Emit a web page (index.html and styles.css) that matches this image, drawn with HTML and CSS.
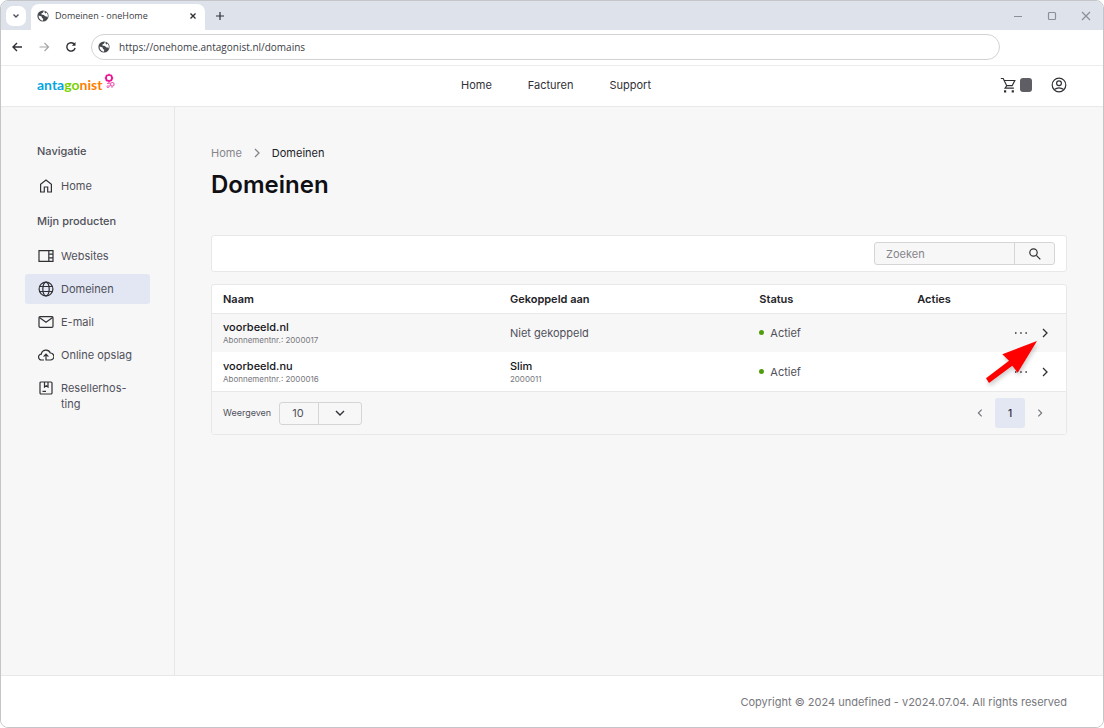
FILE: index.html
```html
<!DOCTYPE html>
<html lang="nl">
<head>
<meta charset="utf-8">
<meta name="viewport" content="width=device-width, initial-scale=1">
<title>Domeinen - oneHome</title>
<link rel="stylesheet" href="styles.css">
</head>
<body>
<svg class="sprite" aria-hidden="true">
  <symbol id="earth" viewBox="0 0 12 12"><circle cx="6" cy="6" r="5.600" fill="#45484c"/><path d="M1.600 5.400 4.600 6.600 5 8l1.200.7-.2 2A4.900 4.900 0 0 1 1.600 5.400ZM6.600 1.300 6 2.700 4.600 3.200 4.400 4.500 7 5l1 1.200 1.600.2.9 1.200A4.900 4.900 0 0 0 9.600 2.600L8.400 3.400 7.600 2.800 8 1.600Z" fill="#fff"/></symbol>
  <symbol id="right" viewBox="0 0 12 12"><path d="M4 2l4 4-4 4" fill="none" stroke="currentColor" stroke-width="1.300"/></symbol>
</svg>
<div class="window">
  <div class="tabstrip">
    <button class="tab-search" aria-label="Tabbladen zoeken"><svg width="8" height="8" viewBox="0 0 8 8"><path d="M1.500 2.500 4 5l2.500-2.500" class="line bold"/></svg></button>
    <div class="tab">
      <svg width="12" height="12"><use href="#earth"/></svg>
      <span class="tab-title">Domeinen - oneHome</span>
      <button class="plain" aria-label="Tabblad sluiten"><svg width="8" height="8" viewBox="0 0 8 8"><path d="m1.500 1.500 5 5m0-5-5 5" class="line bold"/></svg></button>
    </div>
    <button class="plain new-tab" aria-label="Nieuw tabblad"><svg width="10" height="10" viewBox="0 0 10 10"><path d="M5 1v8M1 5h8" class="line"/></svg></button>
    <div class="window-controls">
      <button class="plain" aria-label="Minimaliseren"><svg width="10" height="10" viewBox="0 0 10 10"><path d="M1 5.500h8" class="line"/></svg></button>
      <button class="plain" aria-label="Maximaliseren"><svg width="10" height="10" viewBox="0 0 10 10"><rect x="1.500" y="1.500" width="7" height="7" rx="1" class="line"/></svg></button>
      <button class="plain" aria-label="Sluiten"><svg width="10" height="10" viewBox="0 0 10 10"><path d="m1 1 8 8m0-8-8 8" class="line"/></svg></button>
    </div>
  </div>
  <div class="toolbar">
    <button class="plain" aria-label="Terug"><svg width="12" height="12" viewBox="0 0 12 12"><path d="M11 6H2M6 2 2 6l4 4" class="line bold"/></svg></button>
    <button class="plain faded" aria-label="Vooruit"><svg width="12" height="12" viewBox="0 0 12 12"><path d="M1.500 6h9M6.500 2l4 4-4 4" class="line"/></svg></button>
    <button class="plain" aria-label="Vernieuwen"><svg width="12" height="12" viewBox="0 0 12 12"><path d="M9.500 3.500A4.200 4.200 0 1 0 10.100 7" class="line bold"/><path d="M10.500 1v3.700H6.800Z" fill="currentColor"/></svg></button>
    <label class="address"><svg width="12" height="12"><use href="#earth"/></svg><input type="url" aria-label="Adres" value="https://onehome.antagonist.nl/domains"></label>
  </div>

  <header class="header">
    <a class="logo" href="#" aria-label="antagonist"><span class="blue">anta</span><span class="green">go</span><span class="orange">nist</span><svg width="14" height="20" viewBox="0 0 14 20"><g fill="none" stroke="#ec1593"><circle cx="7" cy="7" r="3" stroke-width="1.700"/><path d="M7 2.800v1.200M2.800 7H4M10 7h1.200M7 10v1.800M4 4l.8.8M10 4l-.8.8M4 10l.8-.8" stroke-width="1.300"/></g><g fill="none" stroke="#f05ab4"><circle cx="10.300" cy="13.300" r="1.800" stroke-width="1.200"/><circle cx="6" cy="15.700" r="1" stroke-width="1"/><path d="m5 12.300 3.500.6M7 15.200l1.800-1M9.700 15.200l.4 1.700" stroke-width="1"/></g></svg></a>
    <nav class="topnav" aria-label="Hoofdmenu"><a href="#">Home</a><a href="#">Facturen</a><a href="#">Support</a></nav>
    <div class="account">
      <button class="plain cart" aria-label="Winkelwagen"><svg width="16" height="18" viewBox="0 0 16 18"><path d="M.8 2.500h2.400l3.500 7.200h5.500l2.600-5.200H4.300M6.700 9.700l-1.600 2.500h8.800" class="line"/><path d="M4 14.200h2.200v2.200H4zM11.700 14.200h2.200v2.200h-2.200z" fill="currentColor"/></svg><span class="badge"></span></button>
      <button class="plain" aria-label="Account"><svg width="16" height="16" viewBox="0 0 16 16"><circle cx="8" cy="8" r="6.800" class="line"/><circle cx="8" cy="6.300" r="2.400" class="line"/><path d="M3.300 12.600c2.800-2.100 6.600-2.100 9.400 0" class="line"/></svg></button>
    </div>
  </header>

  <div class="body">
    <aside class="sidebar">
      <h2>Navigatie</h2>
      <a class="item" href="#"><svg width="16" height="16" viewBox="0 0 16 16"><path d="M2.600 14V6.300L8 2l5.400 4.300V14H9.700V9H6.300v5Z" class="line"/></svg>Home</a>
      <h2 class="second">Mijn producten</h2>
      <a class="item" href="#"><svg width="16" height="16" viewBox="0 0 16 16"><path d="M1 2.700h14v10.600H1ZM10.800 2.700v10.600M10.800 6.200H15M10.800 9.800H15" class="line"/></svg>Websites</a>
      <a class="item active" href="#" aria-current="page"><svg width="16" height="16" viewBox="0 0 16 16"><g class="line"><circle cx="8" cy="8" r="6.900"/><ellipse cx="8" cy="8" rx="3.200" ry="6.900"/><path d="M1.700 5.500h12.600M1.700 10.500h12.600"/></g></svg>Domeinen</a>
      <a class="item" href="#"><svg width="16" height="16" viewBox="0 0 16 16"><rect x="1" y="2.700" width="14" height="10.600" rx="1" class="line"/><path d="m1.400 3.600 6.600 4.600 6.600-4.600" class="line"/></svg>E-mail</a>
      <a class="item" href="#"><svg width="16" height="16" viewBox="0 0 16 16"><path d="M6 13H3.600a2.900 2.900 0 0 1-.3-5.800 4.700 4.700 0 0 1 9-1.200 3.500 3.500 0 0 1 .2 7H8V7.300M5.600 9.600 8 7.200l2.400 2.400" class="line"/></svg>Online opslag</a>
      <a class="item" href="#"><svg width="16" height="16" viewBox="0 0 16 16"><rect x="2" y="2" width="12" height="12" rx="1" class="line"/><path d="M6.500 2v5L8.300 5.700 10 7V2M4.500 11.300H8" class="line"/></svg><span>Resellerhos-<br>ting</span></a>
    </aside>

    <main class="main">
      <nav class="crumbs" aria-label="Kruimelpad"><a href="#">Home</a><svg width="12" height="12"><use href="#right"/></svg><span>Domeinen</span></nav>
      <h1>Domeinen</h1>
      <form class="filter card">
        <div class="search"><input type="search" placeholder="Zoeken" aria-label="Zoeken"><button type="button" aria-label="Zoek"><svg width="14" height="14" viewBox="0 0 14 14"><circle cx="5.500" cy="5.500" r="3.700" class="line"/><path d="m8.300 8.300 4 4" class="line"/></svg></button></div>
      </form>
      <section class="list card">
        <table>
          <colgroup><col class="c-name"><col class="c-link"><col class="c-status"><col></colgroup>
          <thead><tr><th>Naam</th><th>Gekoppeld aan</th><th>Status</th><th>Acties</th></tr></thead>
          <tbody>
            <tr>
              <td><a class="name" href="#">voorbeeld.nl</a><small>Abonnementnr.: 2000017</small></td>
              <td>Niet gekoppeld</td>
              <td><span class="status">Actief</span></td>
              <td><div class="actions"><button class="plain" aria-label="Meer"><svg width="14" height="14" viewBox="0 0 14 14"><path d="M1 6.300h1.500v1.500H1zM6.200 6.300h1.500v1.500H6.200zM11.400 6.300h1.500v1.500h-1.500z" fill="currentColor"/></svg></button><button class="plain" aria-label="Openen"><svg width="12" height="12"><use href="#right"/></svg></button></div></td>
            </tr>
            <tr>
              <td><a class="name" href="#">voorbeeld.nu</a><small>Abonnementnr.: 2000016</small></td>
              <td><a class="name" href="#">Slim</a><small>2000011</small></td>
              <td><span class="status">Actief</span></td>
              <td><div class="actions"><button class="plain" aria-label="Meer"><svg width="14" height="14" viewBox="0 0 14 14"><path d="M1 6.300h1.500v1.500H1zM6.200 6.300h1.500v1.500H6.200zM11.400 6.300h1.500v1.500h-1.500z" fill="currentColor"/></svg></button><button class="plain" aria-label="Openen"><svg width="12" height="12"><use href="#right"/></svg></button></div></td>
            </tr>
          </tbody>
        </table>
        <div class="list-foot">
          <label for="size">Weergeven</label>
          <div class="size"><select id="size"><option>10</option><option>25</option></select><span class="caret"><svg width="12" height="12" viewBox="0 0 12 12"><path d="m2 4 4 4 4-4" class="line bold"/></svg></span></div>
          <div class="pager"><button aria-label="Vorige"><svg class="flip" width="10" height="10"><use href="#right"/></svg></button><button class="current" aria-current="page">1</button><button aria-label="Volgende"><svg width="10" height="10"><use href="#right"/></svg></button></div>
        </div>
        <svg class="pointer" width="60" height="50" viewBox="0 0 60 50" aria-hidden="true"><path d="M53 3 18.300 16.300 25 22.700 2 40.300 5 45 28.300 27.700 33.700 34.700Z" fill="#fe0000"/></svg>
      </section>
    </main>
  </div>
  <footer class="footer">Copyright © 2024 undefined - v2024.07.04. All rights reserved</footer>
</div>
</body>
</html>
```
FILE: styles.css
```css
* { box-sizing: border-box; }
body { margin: 0; background: #fff; color: #50505a; font: 11px/16px Inter, "Open Sans", sans-serif; }
a { color: inherit; text-decoration: none; }
button, input, select { font: inherit; color: inherit; margin: 0; }
svg { display: block; flex: none; }
.sprite { position: absolute; width: 0; height: 0; }
.line { fill: none; stroke: currentColor; stroke-width: 1.2; }
.bold { stroke-width: 1.4; }
.plain { display: flex; align-items: center; padding: 0; border: 0; background: none; color: #303036; }

.window { display: flex; flex-direction: column; min-height: 100vh; border: 1px solid #c3c5c8; border-radius: 8px; overflow: hidden; }

.tabstrip { display: flex; align-items: center; height: 29px; padding: 0 12px 0 5px; background: #dee3eb; }
.tab-search { display: grid; place-items: center; width: 20px; height: 20px; margin-right: 5px; padding: 0; border: 0; border-radius: 7px; background: #fff; }
.tab { display: flex; align-items: center; align-self: flex-end; gap: 6px; width: 174px; height: 26px; padding: 0 8px 2px 6px; border-radius: 8px 8px 0 0; background: #fff; }
.tab-title { flex: 1; font-family: "Open Sans", sans-serif; font-size: 9px; color: #3c3c42; }
.new-tab { margin-left: 10px; }
.window-controls { display: flex; gap: 24px; margin-left: auto; }
.window-controls .plain { color: #8b9097; }

.toolbar { display: flex; align-items: center; gap: 15px; height: 36px; padding: 0 103px 1px 10px; border-bottom: 1px solid #ececec; background: #fff; }
.toolbar .faded { color: #a5a5a8; }
.address { display: flex; flex: 1; align-items: center; gap: 9px; height: 26px; margin-left: -1px; padding: 0 6px; border: 1px solid #d2d2d4; border-radius: 13px; }
.address input { flex: 1; padding: 0; border: 0; outline: 0; background: none; font: 10px/16px "Open Sans", sans-serif; color: #3c3c46; }

.header { display: grid; grid-template-columns: 1fr auto 1fr; align-items: center; height: 41px; padding: 0 36px 2px; border-bottom: 1px solid #e9e9e9; background: #fff; }
.logo { display: flex; align-items: center; font: 14px/18px Lato, sans-serif; font-weight: 700; }
.logo svg { margin-bottom: 8px; }
.blue { color: #04a6e1; }
.green { color: #7ad000; }
.orange { color: #ff7d00; }
.topnav { display: flex; gap: 36px; margin-left: 8px; color: #303036; }
.account { display: flex; justify-content: flex-end; align-items: center; gap: 19px; }
.cart { gap: 4px; }
.badge { width: 12px; height: 14px; border-radius: 3px; background: #605e65; }

.body { display: flex; flex: 1; background: #f7f7f7; }
.sidebar { width: 174px; padding: 36px 24px 24px; border-right: 1px solid #e6e6e6; }
.sidebar h2 { margin: 0 0 12px 12px; font-size: 11px; line-height: 16px; font-weight: 500; }
.sidebar .second { margin-top: 12px; }
.item { display: flex; gap: 7px; margin-bottom: 3px; padding: 7px 13px; border-radius: 3px; }
.item svg { color: #303036; }
.active { background: #e2e7f3; }

.main { flex: 1; min-width: 0; padding: 38px 36px; }
.crumbs { display: flex; align-items: center; gap: 9px; color: #85858b; }
.crumbs span { color: #222228; }
h1 { margin: 8px 0 34px; font-size: 24px; line-height: 32px; font-weight: 600; color: #101014; }
.card { position: relative; border: 1px solid #e8e8e8; border-radius: 3px; background: #fff; }
.filter { display: flex; justify-content: flex-end; margin-bottom: 12px; padding: 6px 11px; }
.search { display: flex; width: 181px; height: 23px; border: 1px solid #d5d5d7; border-radius: 3px; background: #f7f7f7; }
.search input { flex: 1; min-width: 0; padding: 0 11px; border: 0; outline: 0; background: none; }
.search input::placeholder { color: #85858b; opacity: 1; }
.search button { display: grid; place-items: center; width: 40px; padding: 0; border: 0; border-left: 1px solid #d5d5d7; background: none; color: #303036; }

table { width: 100%; border-collapse: collapse; table-layout: fixed; }
.c-name { width: 33.6%; }
.c-link { width: 29.2%; }
.c-status { width: 18.5%; }
th, td { padding: 0 11px; text-align: left; }
th { height: 28px; border-bottom: 1px solid #e8e8e8; font-weight: 600; color: #222228; }
td { height: 39px; }
tbody tr:first-child { background: #f7f7f7; }
.name { display: block; line-height: 14px; font-weight: 500; color: #151519; }
small { display: block; font-size: 8px; line-height: 12px; color: #77777d; }
.status { display: flex; align-items: center; gap: 6px; }
.status::before { content: ""; width: 5px; height: 5px; border-radius: 50%; background: #4f9c0b; }
.actions { display: flex; justify-content: flex-end; gap: 11px; padding-right: 4px; }

.list-foot { display: flex; align-items: center; height: 43px; padding: 0 11px; border-top: 1px solid #e8e8e8; background: #f7f7f7; }
.list-foot label { font-size: 9px; }
.size { position: relative; width: 83px; height: 23px; margin-left: 8px; }
.size select { width: 100%; height: 100%; padding: 0 12px; border: 1px solid #d5d5d7; border-radius: 3px; background: #f7f7f7; appearance: none; }
.caret { position: absolute; top: 1px; right: 1px; bottom: 1px; display: grid; place-items: center; width: 43px; border-left: 1px solid #d5d5d7; color: #303036; pointer-events: none; }
.pager { display: flex; margin-left: auto; }
.pager button { display: grid; place-items: center; width: 30px; height: 30px; padding: 0; border: 0; border-radius: 3px; background: none; font-size: 10px; color: #70707a; }
.pager .current { background: #e2e7f3; font-weight: 500; color: #222238; }
.flip { transform: scaleX(-1); }
.pointer { position: absolute; top: 53px; right: 22px; filter: drop-shadow(1px 3px 2px #0003); }

.footer { padding: 18px 36px 17px; border-top: 1px solid #e8e8e8; background: #fff; text-align: right; color: #77777d; }
```
